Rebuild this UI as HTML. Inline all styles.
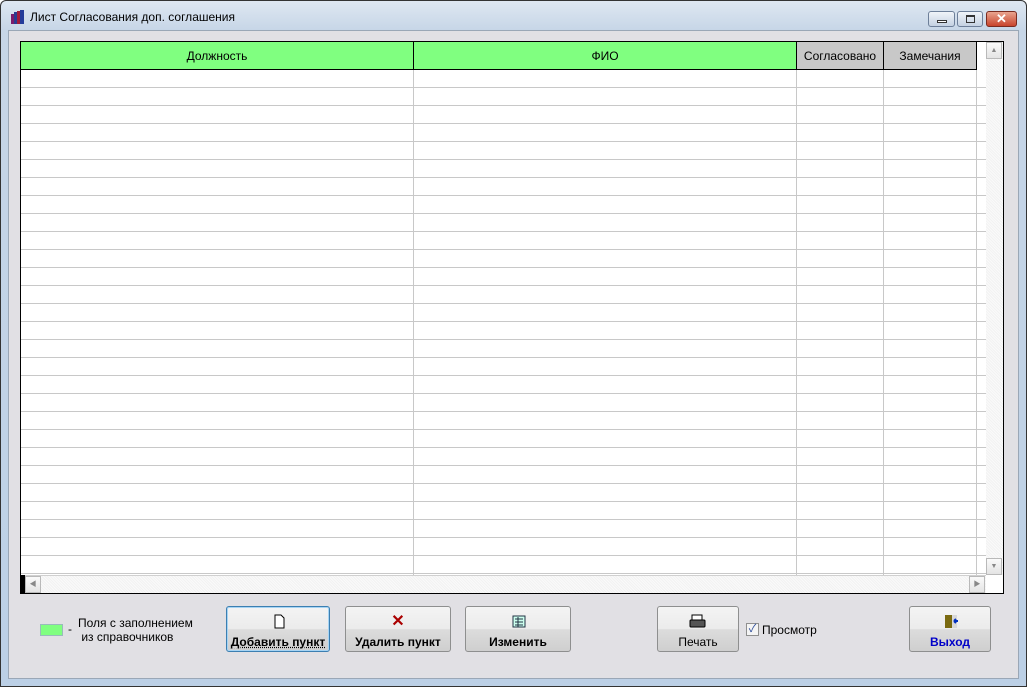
<!DOCTYPE html>
<html><head><meta charset="utf-8"><style>
*{margin:0;padding:0;box-sizing:border-box}
body{width:1027px;height:687px;overflow:hidden;font-family:"Liberation Sans","Noto Sans CJK SC",sans-serif;font-size:12px;color:#000;background:#fff}
.win{position:absolute;left:0;top:0;width:1027px;height:687px;box-shadow:inset 0 0 0 1px #333;border-radius:6px 6px 0 0;background:linear-gradient(#dfe8f2,#c7d6e7 30px,#bcd0e6);}
.title{position:absolute;left:30px;top:10px;font-size:12px;color:#000}
.client{position:absolute;left:8px;top:30px;width:1011px;height:649px;background:#e1e0e4;border:1px solid #9aa7b6}
.grid{position:absolute;left:20px;top:41px;width:984px;height:553px;border:1px solid #000;background:#fff;overflow:hidden}
.hd{position:absolute;top:0;height:28px;border-right:1px solid #000;border-bottom:1px solid #000;text-align:center;line-height:29px;font-size:12px}
.vl{position:absolute;top:28px;width:1px;height:505px;background:#c8c8c8}
.hl{position:absolute;left:0;width:965px;height:1px;background:#c8c8c8}
.vs{position:absolute;left:965px;top:0;width:17px;height:533px;background:repeating-linear-gradient(45deg,#f2f2f2 0 1px,#fafafa 1px 2px)}
.hs{position:absolute;left:0;top:533px;width:965px;height:18px;background:repeating-linear-gradient(45deg,#f2f2f2 0 1px,#fafafa 1px 2px);border-top:1px solid #d0d0d0}
.sb{position:absolute;width:16px;height:17px;border:1px solid #b9b9b9;background:linear-gradient(#fafafa,#e4e4e4);font-size:7px;color:#888;text-align:center;line-height:15px}
.btn{position:absolute;top:606px;height:46px;border:1px solid #8e8f8f;border-radius:3px;background:linear-gradient(#f4f4f4 0,#ebebeb 50%,#dcdcdc 51%,#cfcfcf);text-align:center;font-weight:bold;font-size:12px}
.btn .ic{position:absolute;left:0;right:0;top:6px;height:16px}
.btn .lb{position:absolute;left:0;right:0;top:28px}
</style></head><body>
<div class="win">
<svg style="position:absolute;left:10px;top:9px" width="16" height="16"><rect x="1" y="5" width="3" height="10" fill="#7a1b6c"/><rect x="4" y="3" width="3" height="12" fill="#2b3a8f"/><rect x="7" y="2" width="3" height="13" fill="#a21a3a"/><rect x="10" y="1" width="4" height="14" fill="#243b9a"/></svg>
<div class="title">Лист Согласования доп. соглашения</div>
<div style="position:absolute;left:928px;top:11px;width:27px;height:16px;border:1px solid #6d7f99;border-radius:3px;background:linear-gradient(#f0f4f9,#c4d1e2)"><div style="position:absolute;left:8px;top:8px;width:10px;height:3px;border:1px solid #333;background:#fff"></div></div>
<div style="position:absolute;left:957px;top:11px;width:26px;height:16px;border:1px solid #6d7f99;border-radius:3px;background:linear-gradient(#f0f4f9,#c4d1e2)"><div style="position:absolute;left:8px;top:3px;width:9px;height:8px;border:1px solid #333;border-top-width:2px"></div></div>
<div style="position:absolute;left:986px;top:11px;width:31px;height:16px;border:1px solid #7a2b20;border-radius:3px;background:linear-gradient(#e9a48f,#c8442c);color:#fff;font-weight:bold;text-align:center;line-height:14px;font-size:13px">✕</div>
<div class="client"></div>
<div class="grid">
<div class="hd" style="left:0;width:393px;background:#80ff80">Должность</div>
<div class="hd" style="left:393px;width:383px;background:#80ff80">ФИО</div>
<div class="hd" style="left:776px;width:87px;background:#c8c8c8">Согласовано</div>
<div class="hd" style="left:863px;width:93px;background:#c8c8c8">Замечания</div>
<div class="vl" style="left:392px"></div><div class="vl" style="left:775px"></div><div class="vl" style="left:862px"></div><div class="vl" style="left:955px"></div>
<div class="hl" style="top:45px"></div><div class="hl" style="top:63px"></div><div class="hl" style="top:81px"></div><div class="hl" style="top:99px"></div><div class="hl" style="top:117px"></div><div class="hl" style="top:135px"></div><div class="hl" style="top:153px"></div><div class="hl" style="top:171px"></div><div class="hl" style="top:189px"></div><div class="hl" style="top:207px"></div><div class="hl" style="top:225px"></div><div class="hl" style="top:243px"></div><div class="hl" style="top:261px"></div><div class="hl" style="top:279px"></div><div class="hl" style="top:297px"></div><div class="hl" style="top:315px"></div><div class="hl" style="top:333px"></div><div class="hl" style="top:351px"></div><div class="hl" style="top:369px"></div><div class="hl" style="top:387px"></div><div class="hl" style="top:405px"></div><div class="hl" style="top:423px"></div><div class="hl" style="top:441px"></div><div class="hl" style="top:459px"></div><div class="hl" style="top:477px"></div><div class="hl" style="top:495px"></div><div class="hl" style="top:513px"></div><div class="hl" style="top:531px"></div>
<div class="vs"></div><div class="sb" style="left:965px;top:0">▲</div><div class="sb" style="left:965px;top:516px">▼</div>
<div class="hs"></div><div style="position:absolute;left:0;top:533px;width:4px;height:18px;background:#000"></div>
<div class="sb" style="left:4px;top:534px">◀</div><div class="sb" style="left:948px;top:534px">▶</div>
</div>
<div style="position:absolute;left:40px;top:624px;width:23px;height:12px;background:#80ff80;border:1px solid #9bb"></div>
<div style="position:absolute;left:68px;top:622px">-</div>
<div style="position:absolute;left:78px;top:616px;line-height:14px">Поля с заполнением<br>&nbsp;из справочников</div>
<div class="btn" style="left:226px;width:104px;border-color:#3c7fb1;box-shadow:inset 0 0 0 1px #a6d4f4"><svg class="ic" viewBox="0 0 104 16"><path d="M48 2h6l3 3v10h-9z" fill="#fff" stroke="#000"/></svg><div class="lb" style="text-decoration:underline dotted">Добавить пункт</div></div>
<div class="btn" style="left:345px;width:106px"><div class="ic" style="color:#a00;font-size:16px;top:4px">✕</div><div class="lb">Удалить пункт</div></div>
<div class="btn" style="left:465px;width:106px"><svg class="ic" viewBox="0 0 106 16"><rect x="47" y="3" width="12" height="11" fill="#cfe" stroke="#234"/><path d="M49 6h8M49 9h8M49 12h8M52 4v10" stroke="#234"/></svg><div class="lb">Изменить</div></div>
<div class="btn" style="left:657px;width:82px;font-weight:normal"><svg class="ic" viewBox="0 0 82 16"><rect x="34" y="2" width="10" height="6" fill="#fff" stroke="#000"/><rect x="32" y="7" width="15" height="7" rx="1" fill="#555" stroke="#000"/></svg><div class="lb">Печать</div></div>
<div style="position:absolute;left:746px;top:623px;width:13px;height:13px;border:1px solid #8f8f8f;background:#f4f4f4;color:#2a4a9a;font-size:11px;line-height:11px;text-align:center">✓</div>
<div style="position:absolute;left:762px;top:623px">Просмотр</div>
<div class="btn" style="left:909px;width:82px;color:#0000c8"><svg class="ic" viewBox="0 0 82 16"><rect x="35" y="2" width="7" height="13" fill="#7a6a10"/><rect x="42" y="2" width="5" height="13" fill="#d8d8d8"/><path d="M48 8h-4M44 8l2-2M44 8l2 2" stroke="#0030c0" stroke-width="2"/></svg><div class="lb">Выход</div></div>
</div>
</body></html>
